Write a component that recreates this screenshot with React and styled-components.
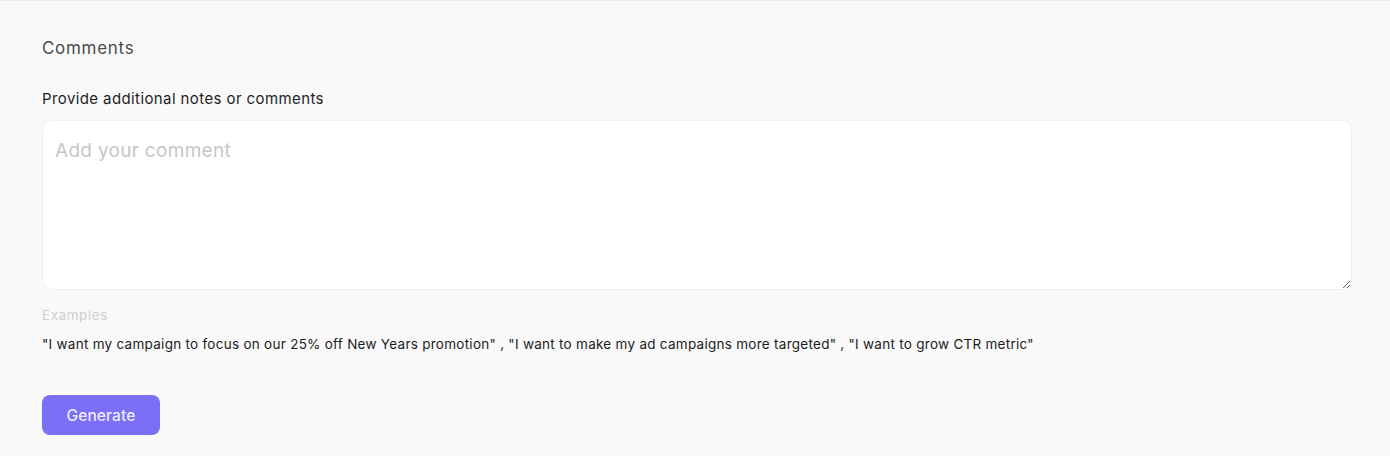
import React from "react";
import styled, { createGlobalStyle } from "styled-components";

const Global = createGlobalStyle`
  html, body { margin: 0; padding: 0; background: #f9f9f9; }
  * { box-sizing: border-box; }
`;

const Panel = styled.section`
  width: 1390px;
  height: 456px;
  background: #f9f9f9;
  border-top: 1px solid #ebebeb;
  padding: 37px 38px 0 42px;
  font-family: Inter, "Helvetica Neue", Arial, sans-serif;
  display: flex;
  flex-direction: column;
`;

const Title = styled.h2`
  margin: 0;
  font-size: 17px;
  letter-spacing: 0.7px;
  font-weight: 400;
  color: #4a4a4a;
  line-height: 20px;
`;

const Label = styled.label`
  margin-top: 32px;
  font-size: 15px;
  letter-spacing: 0.4px;
  font-weight: 400;
  color: #1f1f1f;
  line-height: 18px;
`;

const TextArea = styled.textarea`
  margin-top: 12px;
  width: 1310px;
  height: 170px;
  border: 1px solid #f0f0f0;
  border-radius: 10px;
  background: #ffffff;
  padding: 18px 12px 16px;
  font-family: Inter, "Helvetica Neue", Arial, sans-serif;
  font-size: 19px;
  letter-spacing: 0.3px;
  color: #222;
  outline: none;
  resize: vertical;
  &::placeholder { color: #c6c6c6; }
`;

const Hint = styled.div`
  margin-top: 17px;
  font-size: 13.5px;
  letter-spacing: 0.55px;
  color: #cfcfcf;
  line-height: 16px;
`;

const Examples = styled.p`
  margin: 13px 0 0;
  font-size: 13.5px;
  letter-spacing: 0.27px;
  color: #1c1c1c;
  line-height: 16px;
`;

const Button = styled.button`
  margin-top: 43px;
  width: 118px;
  height: 40px;
  border: none;
  border-radius: 8px;
  background: #7b6ff6;
  color: #eeebff;
  font-family: Inter, "Helvetica Neue", Arial, sans-serif;
  font-size: 15.5px;
  letter-spacing: 0.1px;
  font-weight: 500;
  cursor: pointer;
`;

export default function App() {
  return (
    <>
      <Global />
      <Panel>
        <Title>Comments</Title>
        <Label>Provide additional notes or comments</Label>
        <TextArea placeholder="Add your comment" />
        <Hint>Examples</Hint>
        <Examples>
          "I want my campaign to focus on our 25% off New Years promotion" , "I want to make my ad campaigns more targeted" , "I want to grow CTR metric"
        </Examples>
        <div>
          <Button>Generate</Button>
        </div>
      </Panel>
    </>
  );
}
